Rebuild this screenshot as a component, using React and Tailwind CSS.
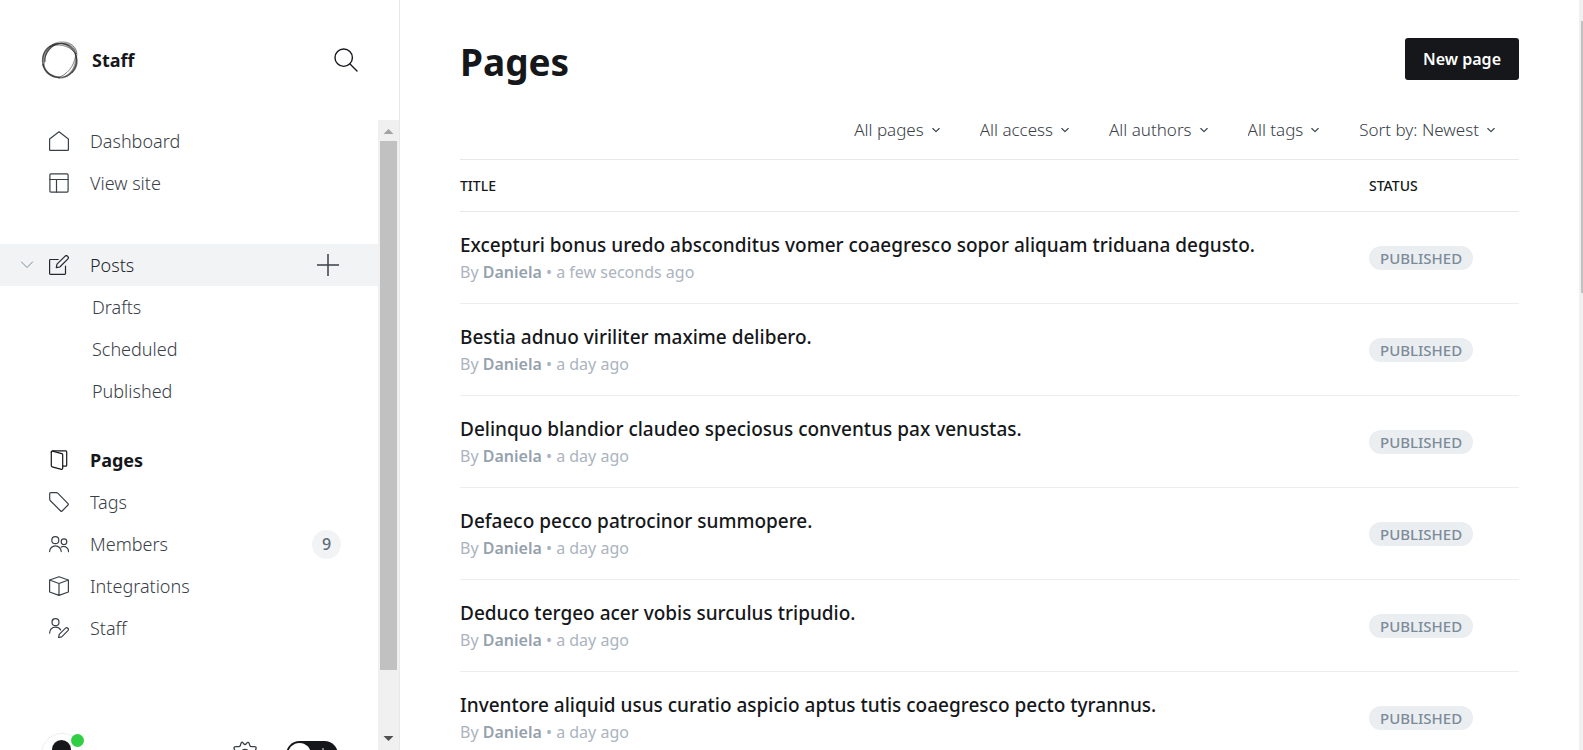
const posts = [
  { title: 'Excepturi bonus uredo absconditus vomer coaegresco sopor aliquam triduana degusto.', when: 'a few seconds ago' },
  { title: 'Bestia adnuo viriliter maxime delibero.', when: 'a day ago' },
  { title: 'Delinquo blandior claudeo speciosus conventus pax venustas.', when: 'a day ago' },
  { title: 'Defaeco pecco patrocinor summopere.', when: 'a day ago' },
  { title: 'Deduco tergeo acer vobis surculus tripudio.', when: 'a day ago' },
  { title: 'Inventore aliquid usus curatio aspicio aptus tutis coaegresco pecto tyrannus.', when: 'a day ago' },
];

const filters = [
  ['Page type', 'All pages'],
  ['Access', 'All access'],
  ['Author', 'All authors'],
  ['Tag', 'All tags'],
  ['Order', 'Sort by: Newest'],
];

function Icon({ children }) {
  return (
    <svg
      viewBox="0 0 20 20"
      className="size-5 shrink-0"
      fill="none"
      stroke="currentColor"
      strokeWidth="1.2"
      strokeLinecap="round"
      strokeLinejoin="round"
      aria-hidden="true"
    >
      {children}
    </svg>
  );
}

const icons = {
  home: <path d="M10 .8 19.400 7.900V18.800a.6.6 0 0 1-.6.6H1.200a.6.6 0 0 1-.6-.6V7.900Z" />,
  layout: (
    <>
      <rect x=".9" y=".9" width="18.200" height="18.200" rx="1" />
      <path d="M.9 6.500H19.100M7.500 6.500V19.100" />
    </>
  ),
  edit: (
    <>
      <path d="M9.200 4.500H1.400a.8.8 0 0 0-.8.8V18.600a.8.8 0 0 0 .8.8H15.700a.8.8 0 0 0 .8-.8V11" />
      <path d="m7.300 12.700.7-3.500L15.900 1.300a1.900 1.900 0 0 1 2.800 2.800L10.800 12Z" />
    </>
  ),
  pages: (
    <>
      <path d="M2.300 1.700V15.800a1.200 1.200 0 0 0 .9 1.100l9.300 2.400a1 1 0 0 0 1.200-1V4.800a1.200 1.200 0 0 0-.9-1.100L3.500 1.200" />
      <path d="M2.300 2.200A1.400 1.400 0 0 1 3.700.8H16.800a.9.9 0 0 1 .9.900V15.200a.9.9 0 0 1-.9.900H13.900" />
    </>
  ),
  tag: <path d="M.7 1.700a1 1 0 0 1 1-1L7.300.7a2.500 2.500 0 0 1 1.700.7L19 11.600a1 1 0 0 1 0 1.400L13.100 19a1 1 0 0 1-1.400 0L1.400 8.800A2.500 2.500 0 0 1 .7 7Z" />,
  members: (
    <>
      <circle cx="6.300" cy="6.200" r="3.500" />
      <circle cx="15" cy="7.700" r="2.800" />
      <path d="M.6 17.600a5.800 5.800 0 0 1 11.600 0M12.300 13.100a4.800 4.800 0 0 1 7.200 4.500" />
    </>
  ),
  box: <path d="M10 .7 19.400 4V16L10 19.400.6 16V4ZM.6 4 10 7.500 19.400 4M10 7.500V19.400" />,
  staff: (
    <>
      <circle cx="6.500" cy="4.200" r="3.500" />
      <path d="M.6 15.200c.3-4 2.800-6.100 5.900-6.100 2.400 0 4.100 1 5.100 2.800" />
      <path d="m9.600 19.500.6-3.100 6.100-6.100a1.700 1.700 0 0 1 2.600 2.400l-6.200 6.200Z" />
    </>
  ),
};

function NavItem({ icon, label, active, children }) {
  return (
    <li className="flex h-[42px] items-center justify-between pr-[37px] pl-[49px]">
      <a
        href="#"
        className={
          active
            ? 'flex items-center gap-[21px] font-bold text-[#15171a]'
            : 'flex items-center gap-[21px] font-light text-[#394047]'
        }
      >
        <Icon>{icons[icon]}</Icon>
        {label}
      </a>
      {children}
    </li>
  );
}

function Logo() {
  return (
    <svg viewBox="0 0 40 40" className="size-10" fill="none" stroke="#1c1c1c" aria-hidden="true">
      <path
        d="M35 13c4 8 2 17-5 22-4 3-8 4-12 3.500 7-1 12-5 15-11 2-5 3-10 2-14.500Z"
        fill="#1c1c1c"
        fillOpacity=".45"
        stroke="none"
      />
      <path d="M18 3.500C27 0 36 5 37 13c-3-5-8-9-19-9.500Z" fill="#1c1c1c" fillOpacity=".3" stroke="none" />
      <path d="M4 27C-.5 17 4 6 15 3.500l7-.5C11 5.500 5.500 13 5 22Z" fill="#1c1c1c" fillOpacity=".45" stroke="none" />
      <path d="M3 24c2 8 8 13 17 13.500" strokeWidth="2" strokeOpacity=".6" />
      <ellipse cx="19.500" cy="20.500" rx="17" ry="17" strokeWidth="1.300" strokeOpacity=".6" />
      <path d="M5 22C4 13 11 4.500 20 3.500c7-.5 13 3 16.500 10.500" strokeWidth="1.200" strokeOpacity=".6" />
      <path d="M12 5C20-.5 33 1 36.500 11c.8 3 .3 5-.5 8" strokeWidth=".8" strokeOpacity=".5" />
      <path d="M9 7c8-4 20-2 26 6 4 7 2.500 15-3 20" strokeWidth=".9" strokeOpacity=".6" />
      <path d="M36 13c-1 9-5 19-16 24" strokeWidth=".9" strokeOpacity=".6" />
    </svg>
  );
}

function Sidebar() {
  return (
    <aside className="flex w-[400px] shrink-0 flex-col border-r border-[#e6e8ea]">
      <div className="flex h-[120px] shrink-0 items-center pr-[41px] pl-10">
        <Logo />
        <span className="ml-3 flex-1 text-lg font-bold text-[#15171a]">Staff</span>
        <button type="button" aria-label="Search" className="text-[#15171a]">
          <svg viewBox="0 0 24 24" className="size-6" fill="none" stroke="currentColor" strokeWidth="1.400" strokeLinecap="round" aria-hidden="true">
            <circle cx="9.700" cy="9.700" r="8.700" />
            <path d="m16 16 7 7" />
          </svg>
        </button>
      </div>

      <div className="flex min-h-0 flex-1">
        <nav className="min-w-0 flex-1 overflow-hidden text-lg leading-6">
          <ul>
            <NavItem icon="home" label="Dashboard" />
            <NavItem icon="layout" label="View site" />
          </ul>

          <div className="mt-10 flex h-[42px] items-center bg-[#f1f3f4] pr-[39px] pl-5 text-[#394047]">
            <button type="button" aria-label="Collapse posts" className="w-[29px] text-[#7c8b9a]">
              <svg viewBox="0 0 14 14" className="size-[14px]" fill="none" stroke="currentColor" strokeLinecap="round" strokeLinejoin="round" aria-hidden="true">
                <path d="m1.500 4 5.500 5.500L12.500 4" />
              </svg>
            </button>
            <a href="#" className="flex flex-1 items-center gap-[21px] font-light text-[#23282d]">
              <Icon>{icons.edit}</Icon>
              Posts
            </a>
            <button type="button" aria-label="New post">
              <svg viewBox="0 0 22 22" className="size-[22px]" fill="none" stroke="currentColor" strokeWidth="1.500" aria-hidden="true">
                <path d="M0 11H22M11 0V22" />
              </svg>
            </button>
          </div>
          <ul className="pl-[92px] font-light text-[#394047]">
            {['Drafts', 'Scheduled', 'Published'].map((label) => (
              <li key={label} className="flex h-[42px] items-center">
                <a href="#">{label}</a>
              </li>
            ))}
          </ul>

          <ul className="mt-[27px]">
            <NavItem icon="pages" label="Pages" active />
            <NavItem icon="tag" label="Tags" />
            <NavItem icon="members" label="Members">
              <span className="flex size-[29px] items-center justify-center rounded-full bg-[#f1f3f4] text-base font-medium text-[#5d6b79]">9</span>
            </NavItem>
            <NavItem icon="box" label="Integrations" />
            <NavItem icon="staff" label="Staff" />
          </ul>

          <div className="mt-[84px] flex items-start pr-10 pl-[41px]">
            <button type="button" aria-label="Account" className="relative">
              <svg viewBox="0 0 42 42" className="size-[42px]" aria-hidden="true">
                <circle cx="21" cy="21" r="20.500" fill="#fff" stroke="#ebeef0" />
                <circle cx="20.500" cy="16.500" r="9.500" fill="#15171a" />
                <path d="M6 35a15 11 0 0 1 30 0 20 20 0 0 1-30 0Z" fill="#15171a" />
              </svg>
              <span className="absolute top-px left-[30px] size-[13px] rounded-full bg-[#30cf43]" />
            </button>
            <span className="flex-1" />
            <button type="button" aria-label="Settings" className="mt-2 mr-7 text-[#394047]">
              <svg viewBox="0 0 26 26" className="size-[26px]" fill="none" stroke="currentColor" strokeWidth="1.300" strokeLinejoin="round" aria-hidden="true">
                <circle cx="13" cy="13" r="4.500" />
                <path d="m9.200 1.800c.6-.8 1.400-.7 1.900 0l.9 1.200c.5.700 1.500.7 2 0l.9-1.200c.5-.7 1.600-.7 2 .1l1.100 3c.3.600.7.800 1.300.8l3.400-.1c1 0 1.700.8 1.400 1.700l-.9 3c-.2.600 0 1.100.5 1.500l.8.700c.7.500.7 1.500 0 2l-1 .9c-.5.400-.6.900-.4 1.500l1 2.800c.3.900-.4 1.700-1.300 1.700l-3.300-.1c-.6 0-1.100.3-1.300.9l-1.100 2.700c-.4.800-1.500.9-2 .2l-1-1.300c-.5-.7-1.500-.7-2 0l-1 1.300c-.5.700-1.600.6-2-.2l-1.100-2.700c-.2-.6-.7-.9-1.300-.9l-3.300.1c-.9 0-1.600-.8-1.300-1.700l1-2.800c.2-.6.1-1.100-.4-1.500l-1-.9c-.7-.5-.7-1.500 0-2l.8-.7c.5-.4.7-.9.500-1.500l-.9-3c-.3-.9.4-1.700 1.400-1.700l3.400.1c.6 0 1-.2 1.300-.8Z" />
              </svg>
            </button>
            <label className="relative mt-2 block h-[27px] w-[52px]">
              <input type="checkbox" role="switch" aria-label="Night shift" className="block h-full w-full appearance-none rounded-full bg-[#15171a]" />
              <span className="pointer-events-none absolute top-0.5 left-0.5 size-[23px] rounded-full bg-white" />
              <svg viewBox="0 0 14 14" className="pointer-events-none absolute top-[7px] right-2 size-[14px]" fill="none" stroke="#fff" strokeLinecap="round" aria-hidden="true">
                <circle cx="7" cy="7" r="2.500" />
                <path d="M7 .5V2.500M7 11.500v1.700M.8 7h1.700M11.500 7h1.700M2.600 2.600l1.200 1.200M10.200 10.200l1.200 1.200M2.600 11.400l1.200-1.200M10.200 3.800l1.200-1.200" />
              </svg>
            </label>
          </div>
        </nav>

        <div className="flex w-[21px] shrink-0 flex-col items-center bg-[#f0f0f0]" aria-hidden="true">
          <svg viewBox="0 0 21 21" className="h-[21px] w-[21px] shrink-0" fill="#a3a3a3">
            <path d="M5.500 14 10.500 9l5 5Z" />
          </svg>
          <div className="w-[17px] grow-[529] basis-0 bg-[#c1c1c1]" />
          <div className="grow-[60] basis-0" />
          <svg viewBox="0 0 21 20" className="h-5 w-[21px] shrink-0" fill="#505050">
            <path d="M5.500 6h10l-5 5Z" />
          </svg>
        </div>
      </div>
    </aside>
  );
}

export default function App() {
  return (
    <div className="flex h-screen overflow-hidden bg-white font-['Noto_Sans','Open_Sans',sans-serif] text-[#15171a]">
      <Sidebar />
      <main className="min-w-0 flex-1 overflow-hidden px-[60px]">
        <header className="flex h-[100px] items-start justify-between pt-[38px]">
          <h1 className="text-[37px] leading-[48px] font-bold">Pages</h1>
          <button type="button" className="h-[42px] rounded-[3px] bg-[#15171a] px-[18px] text-base font-semibold text-white">
            New page
          </button>
        </header>

        <div className="flex h-[59px] items-center justify-end gap-10 pr-6 text-[17px] leading-6 font-light text-[#394047]">
          {filters.map(([name, value]) => (
            <label key={name} className="relative flex items-center">
              <select aria-label={name} className="appearance-none bg-transparent pr-4 [field-sizing:content]">
                <option>{value}</option>
              </select>
              <svg viewBox="0 0 8 8" className="pointer-events-none absolute right-0 size-2" fill="none" stroke="#394047" strokeWidth="1.100" strokeLinecap="round" strokeLinejoin="round" aria-hidden="true">
                <path d="M.8 2.500 4 5.700 7.200 2.500" />
              </svg>
            </label>
          ))}
        </div>

        <table className="w-full border-collapse text-left">
          <thead>
            <tr className="h-[52px] border-y border-[#e6e8ea] text-sm leading-5">
              <th className="font-medium">TITLE</th>
              <th className="w-[150px] font-medium">STATUS</th>
            </tr>
          </thead>
          <tbody>
            {posts.map((post) => (
              <tr key={post.title} className="h-[92px] border-b border-[#ebeef0]">
                <td>
                  <h3 className="text-[19px] leading-7 font-medium">
                    <a href="#">{post.title}</a>
                  </h3>
                  <p className="text-base leading-[26px] text-[#abb4be]">
                    By <span className="font-semibold text-[#95a1ad]">Daniela</span> • {post.when}
                  </p>
                </td>
                <td>
                  <span className="inline-block rounded-full bg-[#ebeef0] px-[11px] text-[15px] leading-6 font-medium text-[#7c8b9a]">PUBLISHED</span>
                </td>
              </tr>
            ))}
          </tbody>
        </table>
      </main>
      <div className="flex w-1 shrink-0 flex-col items-end bg-[#f0f0f0] pt-[21px]" aria-hidden="true">
        <div className="h-[272px] w-0.5 bg-[#c1c1c1]" />
      </div>
    </div>
  );
}
